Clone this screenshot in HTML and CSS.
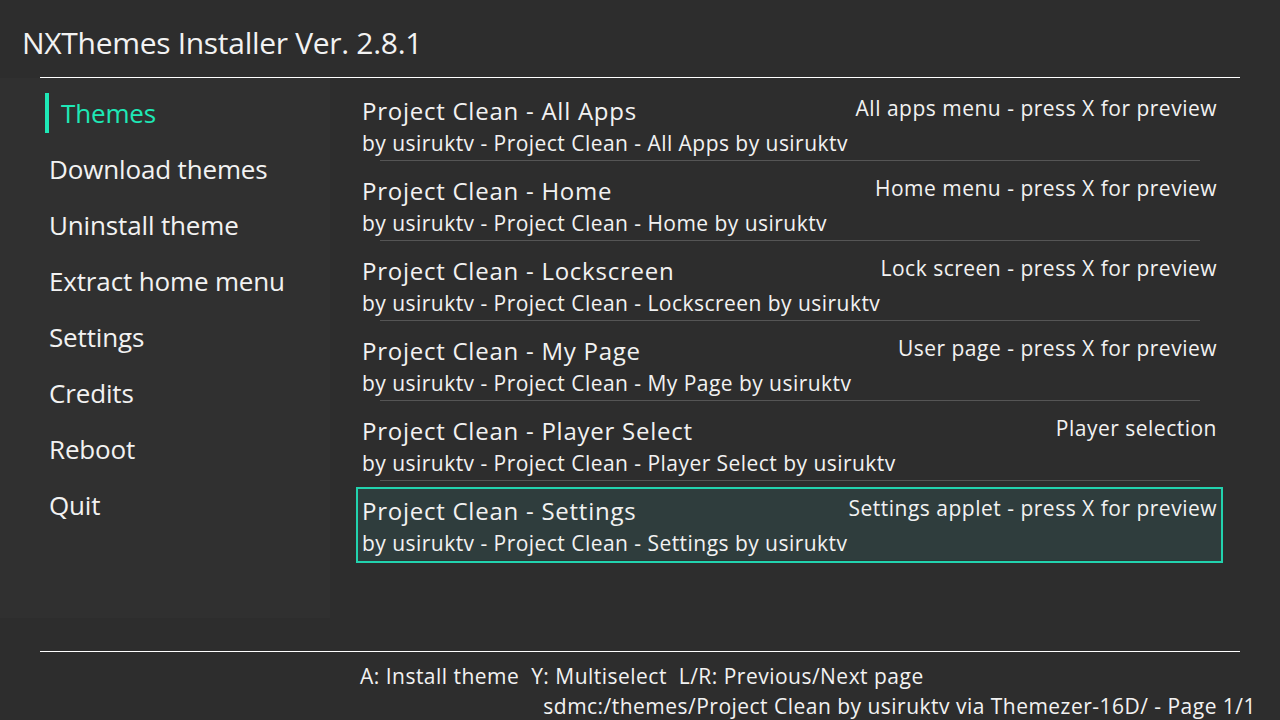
FILE: index.html
```html
<!DOCTYPE html>
<html>
<head>
<meta charset="utf-8">
<link rel="stylesheet" href="styles.css">
</head>
<body>
<div class="app">
  <header class="header">
    <h1 class="title">NXThemes Installer Ver. 2.8.1</h1>
  </header>
  <div class="rule"></div>
  <div class="main">
    <nav class="sidebar">
      <div class="nav-item active">Themes</div>
      <div class="nav-item">Download themes</div>
      <div class="nav-item">Uninstall theme</div>
      <div class="nav-item">Extract home menu</div>
      <div class="nav-item">Settings</div>
      <div class="nav-item">Credits</div>
      <div class="nav-item">Reboot</div>
      <div class="nav-item">Quit</div>
    </nav>
    <section class="list">
      <div class="item">
        <div class="row"><span class="name">Project Clean - All Apps</span><span class="desc">All apps menu - press X for preview</span></div>
        <div class="sub">by usiruktv - Project Clean - All Apps by usiruktv</div>
      </div>
      <div class="item">
        <div class="row"><span class="name">Project Clean - Home</span><span class="desc">Home menu - press X for preview</span></div>
        <div class="sub">by usiruktv - Project Clean - Home by usiruktv</div>
      </div>
      <div class="item">
        <div class="row"><span class="name">Project Clean - Lockscreen</span><span class="desc">Lock screen - press X for preview</span></div>
        <div class="sub">by usiruktv - Project Clean - Lockscreen by usiruktv</div>
      </div>
      <div class="item">
        <div class="row"><span class="name">Project Clean - My Page</span><span class="desc">User page - press X for preview</span></div>
        <div class="sub">by usiruktv - Project Clean - My Page by usiruktv</div>
      </div>
      <div class="item">
        <div class="row"><span class="name">Project Clean - Player Select</span><span class="desc">Player selection</span></div>
        <div class="sub">by usiruktv - Project Clean - Player Select by usiruktv</div>
      </div>
      <div class="item selected">
        <div class="row"><span class="name">Project Clean - Settings</span><span class="desc">Settings applet - press X for preview</span></div>
        <div class="sub">by usiruktv - Project Clean - Settings by usiruktv</div>
      </div>
    </section>
  </div>
  <footer class="footer">
    <div class="hint">A: Install theme&nbsp;&nbsp;Y: Multiselect&nbsp;&nbsp;L/R: Previous/Next page</div>
    <div class="path">sdmc:/themes/Project Clean by usiruktv via Themezer-16D/ - Page 1/1</div>
  </footer>
</div>
</body>
</html>
```
FILE: styles.css
```css
html, body {
  margin: 0;
  padding: 0;
}
body {
  background: #2d2d2d;
  color: #f2f2f2;
  font-family: "Open Sans", "Noto Sans", sans-serif;
}
.app {
  width: 1280px;
  height: 720px;
  display: flex;
  flex-direction: column;
  overflow: hidden;
}
.header {
  height: 77px;
  padding-left: 22px;
  box-sizing: border-box;
}
.title {
  margin: 0;
  padding-top: 22px;
  font-size: 30px;
  font-weight: 400;
  line-height: 42px;
  letter-spacing: -0.3px;
}
.rule {
  height: 1px;
  background: #ffffff;
  margin: 0 40px;
}
.main {
  display: flex;
  height: 575px;
}
.sidebar {
  width: 330px;
  background: #303030;
  padding-top: 7px;
  box-sizing: border-box;
  height: 540px;
}
.nav-item {
  height: 56px;
  display: flex;
  align-items: center;
  padding-left: 49px;
  font-size: 26px;
  letter-spacing: -0.15px;
  color: #f2f2f2;
}
.nav-item.active {
  color: #1ee8b6;
  padding-left: 45px;
}
.nav-item.active::before {
  content: "";
  width: 4px;
  height: 40px;
  background: #1ee8b6;
  margin-right: 12px;
}
.list {
  padding-left: 26px;
  padding-top: 9px;
  width: 867px;
  flex: none;
}
.item {
  position: relative;
  height: 76px;
  box-sizing: border-box;
  border: 2px solid transparent;
  padding: 6px 4px 0 4px;
  margin-bottom: 4px;
}
.item::after {
  content: "";
  position: absolute;
  left: 22px;
  right: 21px;
  bottom: 0;
  height: 1px;
  background: #555555;
}
.item.selected {
  border-color: #22d3ae;
  background: #2f3d3d;
}
.item.selected::after {
  background: #2a3535;
}
.row {
  display: flex;
  justify-content: space-between;
  align-items: flex-start;
  height: 32px;
}
.name {
  font-size: 24px;
  line-height: 32px;
  letter-spacing: 0.75px;
}
.desc {
  font-size: 21px;
  line-height: 26px;
  letter-spacing: 0.5px;
}
.sub {
  font-size: 21px;
  line-height: 32px;
  letter-spacing: 0.46px;
}
.footer {
  border-top: 1px solid #ffffff;
  margin: 0 40px;
  height: 68px;
  font-size: 21px;
  letter-spacing: 0.48px;
}
.hint {
  padding-left: 320px;
  line-height: 30px;
  padding-top: 9px;
}
.path {
  text-align: right;
  margin-right: -16px;
  line-height: 30px;
  white-space: nowrap;
}
```
